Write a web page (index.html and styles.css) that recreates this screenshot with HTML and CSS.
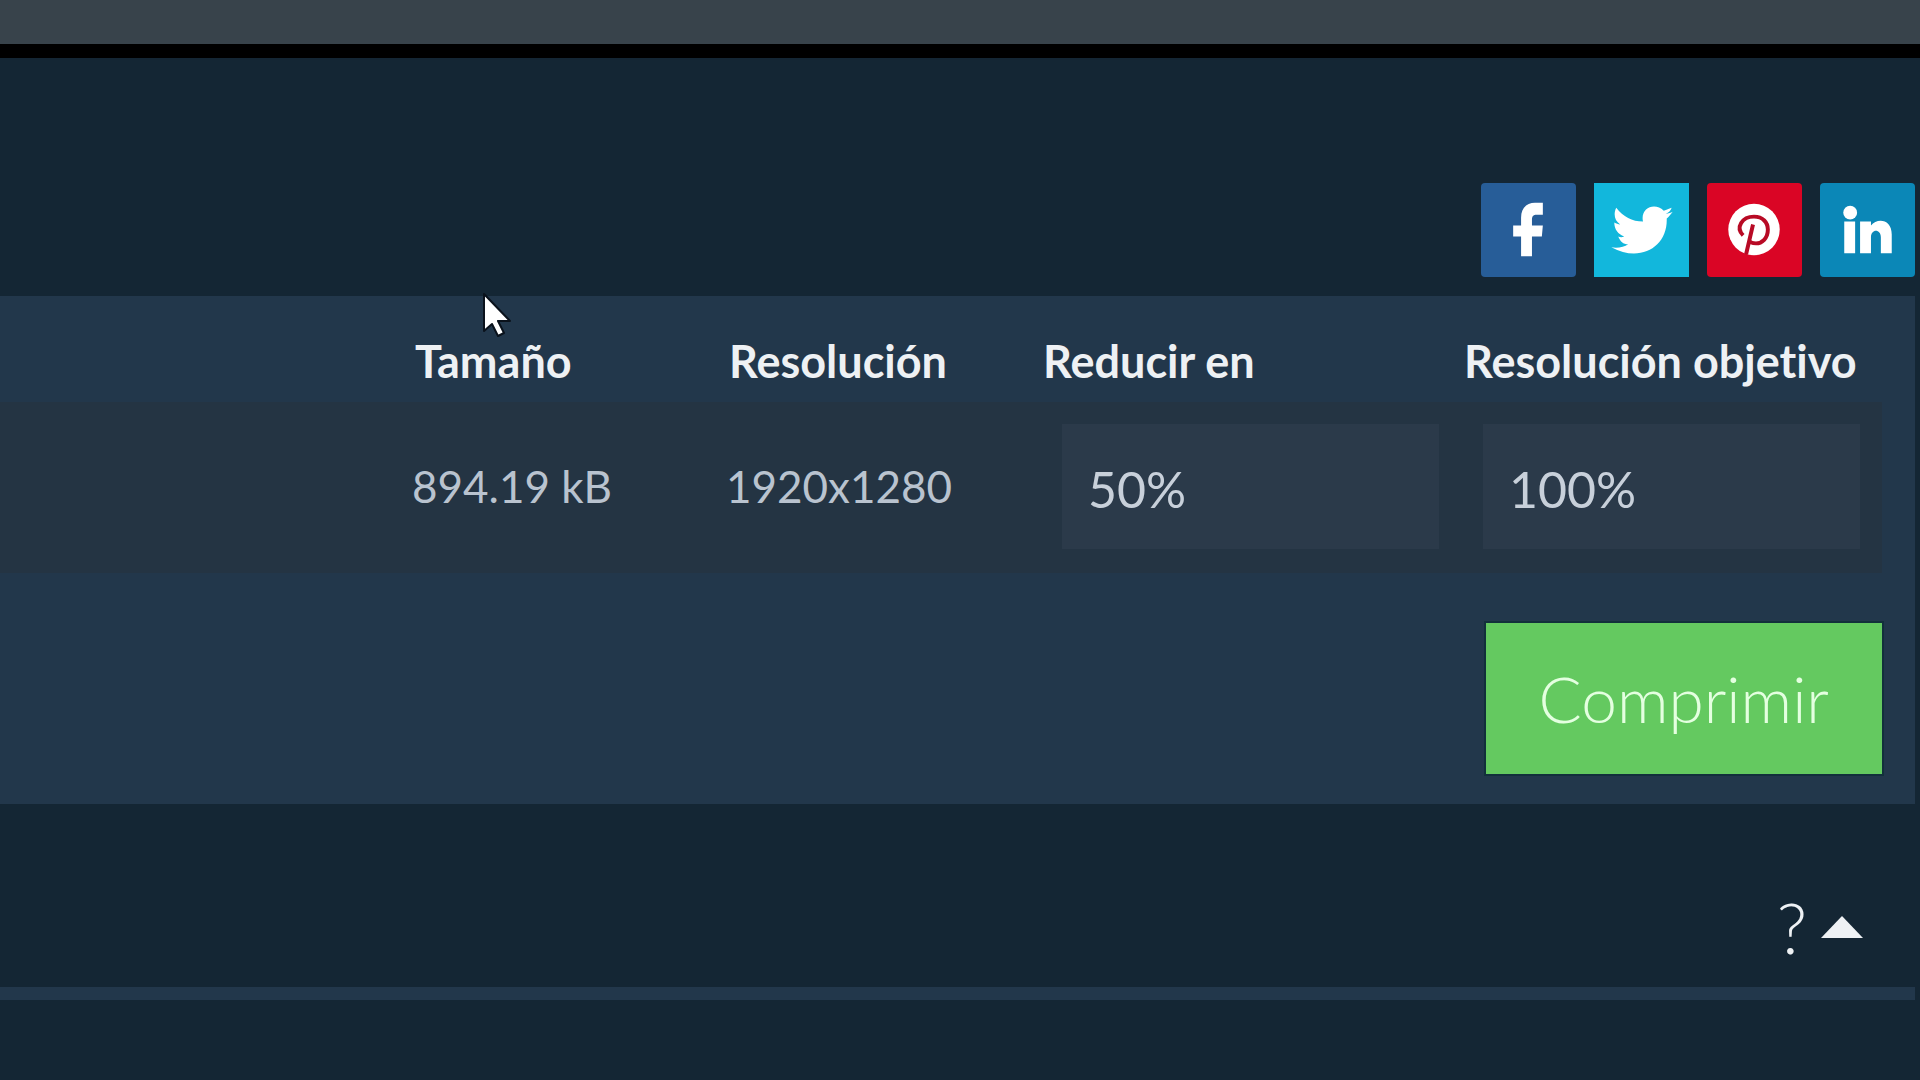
FILE: index.html
```html
<!DOCTYPE html>
<html lang="es">
<head>
  <meta charset="UTF-8">
  <meta name="viewport" content="width=device-width, initial-scale=1.0">
  <title>Comprimir</title>
  <link rel="stylesheet" href="styles.css">
</head>
<body>
  <div class="topbar"></div>
  <main class="container">
    <nav class="social">
      <a class="facebook" href="#" aria-label="Facebook">
        <svg viewBox="0 0 95 95"><path d="M62 20v12h-6c-4 0-5 2-5 5v6h11l-1 11H51v20H40V54h-8V43h8v-8c0-10 6-15 14-15z"/></svg>
      </a>
      <a class="twitter" href="#" aria-label="Twitter">
        <svg viewBox="0 0 95 95"><path d="M79 29c-2 1-4 2-7 2 3-1 5-3 6-6-3 1-5 2-8 3-9-9-24-3-21 11-11 0-20-5-27-14-3 6-2 13 4 17-2 0-4-1-6-2 0 7 4 12 10 14-2 1-4 1-6 0 2 5 5 8 10 8-4 3-11 4-17 3 29 16 57 0 56-29 2-2 4-4 6-7z"/></svg>
      </a>
      <a class="pinterest" href="#" aria-label="Pinterest">
        <svg viewBox="0 0 95 95">
          <circle cx="47" cy="47" r="26"/>
          <path class="mark" d="M39 72l7-30M36 53c-8-8-1-19 11-19 9 0 14 6 14 13 0 9-6 14-12 14-4 0-6-1-7-3"/>
        </svg>
      </a>
      <a class="linkedin" href="#" aria-label="LinkedIn">
        <svg viewBox="0 0 95 95">
          <circle cx="30" cy="30" r="7"/>
          <path d="M24 39h11v32H24zM40 39h11v4c6-8 21-7 21 9v19H61V55c0-9-10-9-10 0v16H40z"/>
        </svg>
      </a>
    </nav>

    <form class="panel">
      <table class="files">
        <thead>
          <tr>
            <th></th>
            <th class="size">Tamaño</th>
            <th class="resolution">Resolución</th>
            <th class="reduce"><label for="reduce">Reducir en</label></th>
            <th class="target"><label for="target">Resolución objetivo</label></th>
          </tr>
        </thead>
        <tbody>
          <tr>
            <td></td>
            <td>894.19 kB</td>
            <td>1920x1280</td>
            <td class="field"><input type="text" id="reduce" name="reduce" value="50%"></td>
            <td class="field"><input type="text" id="target" name="target" value="100%"></td>
          </tr>
        </tbody>
      </table>
      <button class="compress" type="button">Comprimir</button>
    </form>

    <div class="help">
      <button class="help-toggle" type="button">
        ?
        <svg viewBox="0 0 42 22"><path d="M21 0l21 22H0z"/></svg>
      </button>
    </div>
  </main>

  <svg class="cursor" viewBox="0 0 30 46"><path d="M2 2v37l8-7 6 12 6-3-6-12h12z"/></svg>
</body>
</html>
```

FILE: styles.css
```css
* {
  box-sizing: border-box;
}
body {
  margin: 0;
  background-color: #142634;
  color: #eef1f4;
  font-family: Lato, sans-serif;
}
button,
input {
  font-family: inherit;
}
.topbar {
  height: 58px;
  background-color: #38434b;
  border-bottom: 14px solid #000;
}
.container {
  padding: 125px 5px 0 0;
}
.social {
  display: flex;
  justify-content: flex-end;
  gap: 18px;
}
.social a {
  width: 95px;
  height: 94px;
  border-radius: 4px;
}
.social svg {
  display: block;
  width: 100%;
  height: 100%;
  fill: #fff;
}
.facebook {
  background-color: #275d98;
}
.social .twitter {
  border-radius: 0;
  background-color: #12b7dc;
}
.pinterest {
  background-color: #da0525;
}
.social .mark {
  fill: none;
  stroke: #b80a25;
  stroke-width: 4;
}
.linkedin {
  background-color: #0b87b7;
}
.panel {
  display: flex;
  flex-direction: column;
  margin-top: 19px;
  padding: 0 33px 30px 0;
  background-color: #22374b;
}
.files {
  width: 100%;
  table-layout: fixed;
  border-collapse: collapse;
  text-align: left;
}
th {
  height: 106px;
  padding: 24px 0 0 3px;
  font-size: 45px;
  font-weight: bold;
  font-variant-ligatures: none;
  line-height: 54px;
  white-space: nowrap;
}
td {
  height: 171px;
  padding: 0 0 4px;
  background-color: #243443;
  color: #b9c3cf;
  font-size: 44px;
}
.size,
.resolution {
  width: 314px;
}
.reduce,
.target {
  width: 421px;
}
.field {
  padding: 0 22px 2px;
}
.field input {
  display: block;
  width: 100%;
  height: 125px;
  padding: 4px 26px 0;
  border: none;
  background-color: #2b3a4a;
  color: #c8d0da;
  font-size: 50px;
}
.compress {
  align-self: flex-end;
  margin-top: 50px;
  padding: 38px 53px 37px;
  border: none;
  background-color: #64c960;
  box-shadow: 0 0 0 2px #12303b;
  color: #e4ffe0;
  font-size: 64px;
  font-weight: 300;
  line-height: 76px;
}
.help {
  display: flex;
  justify-content: flex-end;
  margin-top: 81px;
  padding: 0 52px 18px 0;
  border-bottom: 13px solid #22374b;
}
.help-toggle {
  display: flex;
  align-items: center;
  gap: 14px;
  padding: 0;
  border: none;
  background: none;
  color: #eef1f4;
  font-size: 70px;
  font-weight: 300;
  line-height: 84px;
}
.help-toggle svg {
  width: 42px;
  height: 22px;
  fill: #eef1f4;
}
.cursor {
  position: absolute;
  top: 292px;
  left: 482px;
  width: 30px;
  height: 46px;
  fill: #fff;
  stroke: #0a121c;
  stroke-width: 2;
  stroke-linejoin: round;
}
```
